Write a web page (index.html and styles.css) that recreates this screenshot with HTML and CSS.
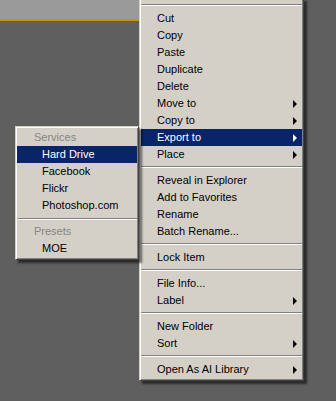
FILE: index.html
```html
<!DOCTYPE html>
<html lang="en">
<head>
    <meta charset="UTF-8">
    <title>Context menu</title>
    <link rel="stylesheet" href="styles.css">
</head>
<body>
    <div class="panel-top"></div>

    <div class="menu main-menu">
        <div class="sep"></div>
        <div class="item">Cut</div>
        <div class="item">Copy</div>
        <div class="item">Paste</div>
        <div class="item">Duplicate</div>
        <div class="item">Delete</div>
        <div class="item">Move to <span class="arrow"></span></div>
        <div class="item">Copy to <span class="arrow"></span></div>
        <div class="item active">Export to <span class="arrow"></span></div>
        <div class="item">Place <span class="arrow"></span></div>
        <div class="sep"></div>
        <div class="item">Reveal in Explorer</div>
        <div class="item">Add to Favorites</div>
        <div class="item">Rename</div>
        <div class="item">Batch Rename...</div>
        <div class="sep"></div>
        <div class="item">Lock Item</div>
        <div class="sep"></div>
        <div class="item">File Info...</div>
        <div class="item">Label <span class="arrow"></span></div>
        <div class="sep"></div>
        <div class="item">New Folder</div>
        <div class="item">Sort <span class="arrow"></span></div>
        <div class="sep"></div>
        <div class="item">Open As AI Library <span class="arrow"></span></div>
    </div>

    <div class="menu sub-menu">
        <div class="item heading">Services</div>
        <div class="item active">Hard Drive</div>
        <div class="item">Facebook</div>
        <div class="item">Flickr</div>
        <div class="item">Photoshop.com</div>
        <div class="sep sub-sep"></div>
        <div class="item heading">Presets</div>
        <div class="item">MOE</div>
    </div>
</body>
</html>
```

FILE: styles.css
```css
html, body {
    margin: 0;
    padding: 0;
}
body {
    width: 336px;
    height: 401px;
    background-color: #5f5f5f;
    font-family: 'Liberation Sans', Arial, sans-serif;
    font-size: 11px;
    color: #000;
    overflow: hidden;
    position: relative;
}
.panel-top {
    width: 200px;
    height: 19px;
    background-color: #9a9a9a;
    border-bottom: 2px solid #cc9206;
}

/* menus */
.menu {
    position: absolute;
    background-color: #d4d0c8;
    border: 1px solid;
    border-color: #d4d0c8 #404040 #404040 #d4d0c8;
    padding: 2px 1px;
    box-shadow: inset 1px 1px #fff, inset -1px -1px #808080, 3px 3px 2px rgba(0,0,0,0.55);
}
.main-menu {
    left: 139px;
    top: -2px;
    width: 161px;
}
.sub-menu {
    left: 15px;
    top: 126px;
    width: 120px;
}
.item {
    height: 17px;
    line-height: 17px;
    padding-left: 16px;
    display: flex;
    align-items: center;
    justify-content: space-between;
    white-space: nowrap;
}
.sub-menu .item {
    padding-left: 25px;
}
.sub-menu .heading {
    padding-left: 17px;
    color: #858585;
}
.item.active {
    background-color: #0a246a;
    color: #fff;
}
.arrow {
    width: 0;
    height: 0;
    margin-right: 5px;
    border-left: 4px solid #000;
    border-top: 4px solid transparent;
    border-bottom: 4px solid transparent;
}
.active .arrow {
    border-left-color: #fff;
}
.sep {
    padding: 3px 0 4px;
}
.sep::after {
    content: "";
    display: block;
    border-top: 1px solid #808080;
    border-bottom: 1px solid #fff;
}
.sub-sep {
    padding: 4px 0 3px 1px;
}
```
